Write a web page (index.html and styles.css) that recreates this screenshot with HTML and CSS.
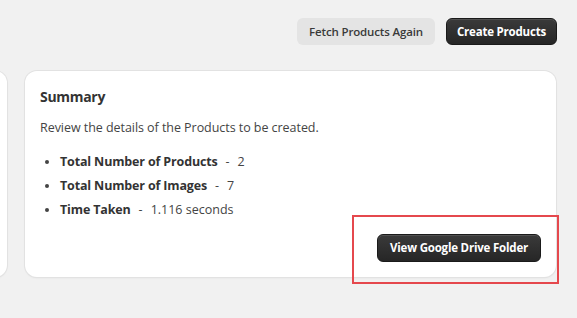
FILE: index.html
```html
<!DOCTYPE html>
<html>
<head>
<meta charset="utf-8">
<link rel="stylesheet" href="styles.css">
</head>
<body>
<div class="page">
  <div class="toolbar">
    <button class="btn btn-light">Fetch Products Again</button>
    <button class="btn btn-dark btn-create">Create Products</button>
  </div>
  <div class="cards">
    <div class="card card-prev"></div>
    <div class="card card-main">
      <h2 class="title">Summary</h2>
      <p class="desc">Review the details of the Products to be created.</p>
      <ul class="stats">
        <li><b>Total Number of Products</b><span class="sep">-</span>2</li>
        <li><b>Total Number of Images</b><span class="sep">-</span>7</li>
        <li><b>Time Taken</b><span class="sep">-</span>1.116 seconds</li>
      </ul>
      <div class="actions">
        <button class="btn btn-dark btn-drive">View Google Drive Folder</button>
      </div>
    </div>
  </div>
  <div class="highlight"></div>
</div>
</body>
</html>
```
FILE: styles.css
```css
* { box-sizing: border-box; }
html, body {
  margin: 0;
  padding: 0;
  background: #f1f1f1;
  font-family: "Open Sans", "Noto Sans", sans-serif;
  color: #333;
}
.page {
  position: relative;
  width: 577px;
  height: 318px;
  overflow: hidden;
}
.toolbar {
  display: flex;
  justify-content: flex-end;
  gap: 11px;
  padding: 18px 20px 0 0;
}
.btn {
  font-family: inherit;
  font-size: 11.5px;
  font-weight: 600;
  letter-spacing: -0.15px;
  height: 27px;
  border-radius: 6px;
  padding: 0 12px;
  cursor: pointer;
  line-height: 1;
}
.btn-light {
  background: #e4e4e4;
  border: none;
  color: #3a3a3a;
}
.btn-dark {
  background: linear-gradient(#3a3a3a, #262626);
  border: 1px solid #1a1a1a;
  color: #fff;
  font-weight: 700;
  letter-spacing: -0.2px;
  box-shadow: inset 0 1px 0 rgba(255,255,255,0.12);
}
.btn-create {
  padding: 0 10px;
}
.cards {
  display: flex;
  gap: 18px;
  margin-top: 26px;
  padding-right: 21px;
}
.card {
  background: #fff;
  border-radius: 12px;
  box-shadow: 0 0 0 1px #e2e2e2, 0 1px 2px rgba(0,0,0,0.08);
}
.card-prev {
  width: 200px;
  margin-left: -193px;
  flex: none;
}
.card-main {
  flex: 1;
  height: 206px;
  padding: 16px 15px 15px 15px;
  display: flex;
  flex-direction: column;
}
.title {
  margin: 0;
  font-size: 14px;
  font-weight: 700;
  letter-spacing: -0.3px;
  line-height: 20px;
  color: #333;
}
.desc {
  margin: 12px 0 0;
  font-size: 12.5px;
  letter-spacing: -0.05px;
  line-height: 18px;
  color: #444;
}
.stats {
  margin: 13px 0 0;
  padding-left: 20px;
  font-size: 12.5px;
  line-height: 24px;
  color: #444;
}
.stats b {
  color: #333;
  font-weight: 700;
  letter-spacing: -0.15px;
}
.sep {
  margin: 0 8px;
}
.actions {
  margin-top: auto;
  display: flex;
  justify-content: flex-end;
}
.btn-drive {
  height: 28px;
  padding: 0 12px;
}
.highlight {
  position: absolute;
  left: 352px;
  top: 215px;
  width: 207px;
  height: 69px;
  border: 2px solid #e5484d;
}
```
